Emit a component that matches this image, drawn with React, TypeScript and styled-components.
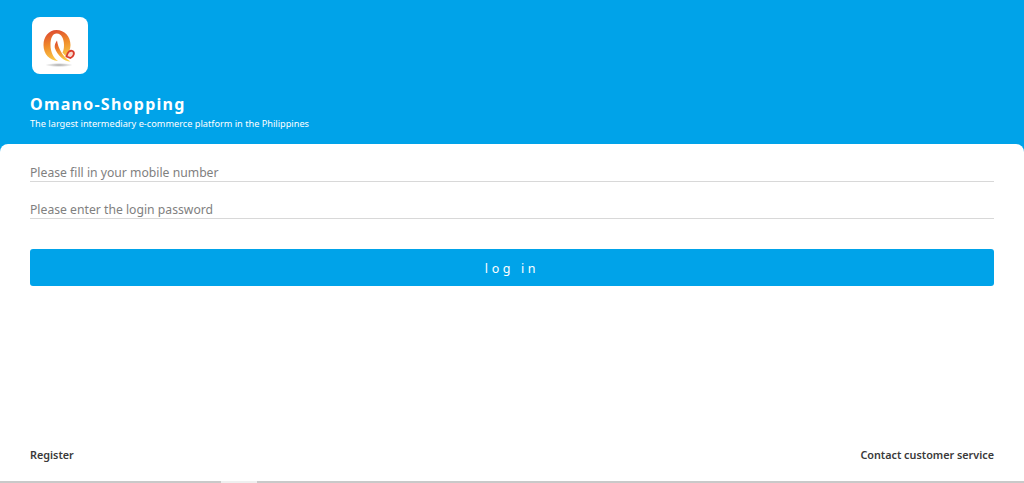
import React from "react";
import styled, { createGlobalStyle } from "styled-components";

const Global = createGlobalStyle`
  html, body { margin: 0; padding: 0; height: 100%; background: #fff; overflow: hidden; }
  #root { height: 100%; }
  * { box-sizing: border-box; }
`;
const Page = styled.div`
  height: 483px; display: flex; flex-direction: column; background: #00a3e9;
  font-family: "Noto Sans", "Open Sans", sans-serif;
`;
const Header = styled.header`
  height: 144px; flex: none; padding: 17px 30px 0; color: #fff;
`;
const LogoTile = styled.div`
  width: 56px; height: 57px; margin-left: 2px; background: #fff; border-radius: 8px;
  display: flex; align-items: center; justify-content: center;
`;
const Title = styled.h1`
  margin: 19px 0 0; font-size: 16px; line-height: 22px; font-weight: 700; letter-spacing: 1.25px;
`;
const Subtitle = styled.p`
  margin: 2px 0 0; font-size: 9.2px; line-height: 13px;
`;
const Panel = styled.main`
  flex: 1; background: #fff; border-radius: 8px 8px 0 0; padding: 18px 30px 0;
  display: flex; flex-direction: column;
`;
const Field = styled.input`
  display: block; width: 100%; height: 20px; margin-bottom: 17px; padding: 2px 0 0; border: 0;
  border-bottom: 1px solid #d8d8d8; outline: none; background: transparent;
  font: 400 12.2px/17px "Noto Sans", sans-serif; color: #333;
  &::placeholder { color: #808080; opacity: 1; }
`;
const LoginButton = styled.button`
  width: 100%; height: 37px; margin-top: 13px; padding: 1px 0 0; border: 0; border-radius: 3px; background: #00a3e9;
  color: #fff; font: 400 12.5px "Noto Sans", sans-serif; letter-spacing: 3.6px;
`;
const Footer = styled.footer`
  margin-top: auto; height: 35px; display: flex; justify-content: space-between;
`;
const FooterLink = styled.a`
  font-size: 10.8px; line-height: 18px; font-weight: 600; color: #3a3a3a;
`;
const ScrollTrack = styled.div`
  height: 2px; flex: none; background: #c9c9c9; padding-left: 221px;
`;
const ScrollThumb = styled.div`
  width: 36px; height: 2px; background: #efefef;
`;

const Logo = () => (
  <svg width="56" height="56" viewBox="0 0 56 56" aria-label="Omano logo">
    <defs>
      <linearGradient id="q" x1="0.3" y1="0" x2="0.55" y2="1">
        <stop offset="0" stopColor="#dd4a30" />
        <stop offset="0.45" stopColor="#f08a2a" />
        <stop offset="1" stopColor="#fcd04a" />
      </linearGradient>
      <radialGradient id="s">
        <stop offset="0" stopColor="#a8a8a8" />
        <stop offset="1" stopColor="#ffffff" />
      </radialGradient>
    </defs>
    <ellipse cx="27" cy="47" rx="14" ry="2" fill="url(#s)" />
    <path fill="url(#q)" d="M24.500 12C16.500 12 11.500 19 11.500 27C11.500 36 17.500 42.500 26 43C21.500 40 18.500 34 18.500 27C18.500 20 20.500 15.500 24.800 15.500C29.500 15.500 32 21 32 27C32 30 31.500 32.500 30.500 34.500L33.500 38C37 35 38.500 31 38.500 27C38.500 18.500 32.500 12 24.500 12Z" />
    <path fill="url(#q)" d="M25 22.500C26 30 30.500 38.500 38.500 43.500C32 43.500 25.500 37.500 22.800 30C22.300 27.500 23.500 24.500 25 22.500Z" />
    <path d="M34.500 38.500C35.500 34 38 32 40.500 33C43 34.500 42 38.500 38.500 40Z" fill="#f8d8cc" stroke="#d93a2b" strokeWidth="1.8" />
  </svg>
);

export default function App() {
  return (
    <Page>
      <Global />
      <Header>
        <LogoTile><Logo /></LogoTile>
        <Title>Omano-Shopping</Title>
        <Subtitle>The largest intermediary e-commerce platform in the Philippines</Subtitle>
      </Header>
      <Panel>
        <Field placeholder="Please fill in your mobile number" />
        <Field type="password" placeholder="Please enter the login password" />
        <LoginButton>log in</LoginButton>
        <Footer>
          <FooterLink>Register</FooterLink>
          <FooterLink>Contact customer service</FooterLink>
        </Footer>
      </Panel>
      <ScrollTrack><ScrollThumb /></ScrollTrack>
    </Page>
  );
}
